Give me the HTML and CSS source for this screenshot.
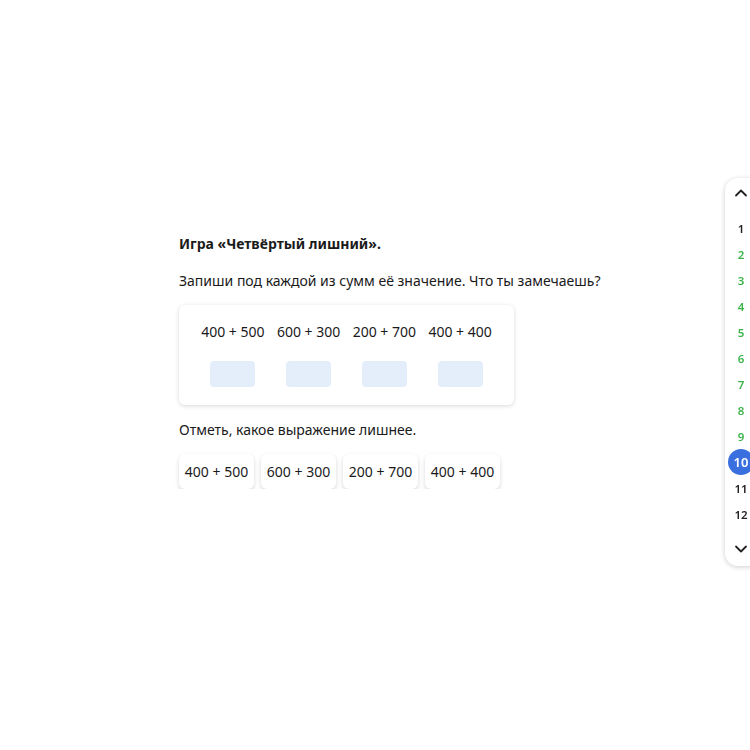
FILE: index.html
```html
<!DOCTYPE html>
<html lang="ru">
<head>
    <meta charset="UTF-8">
    <title>Четвёртый лишний</title>
    <link rel="stylesheet" href="styles.css">
</head>
<body>
    <div class="task">
        <p class="title">Игра «Четвёртый лишний».</p>
        <p class="text">Запиши под каждой из сумм её значение. Что ты замечаешь?</p>

        <!-- Sums with inputs -->
        <div class="card">
            <div class="sum">
                <span>400 + 500</span>
                <div class="answer"></div>
            </div>
            <div class="sum">
                <span>600 + 300</span>
                <div class="answer"></div>
            </div>
            <div class="sum">
                <span>200 + 700</span>
                <div class="answer"></div>
            </div>
            <div class="sum">
                <span>400 + 400</span>
                <div class="answer"></div>
            </div>
        </div>

        <p class="text">Отметь, какое выражение лишнее.</p>

        <div class="choices">
            <button>400 + 500</button>
            <button>600 + 300</button>
            <button>200 + 700</button>
            <button>400 + 400</button>
        </div>
    </div>

    <!-- Task navigation -->
    <nav class="pager">
        <svg class="arrow" width="14" height="10" viewBox="0 0 14 10"><path d="M2 7.5 L7 2.5 L12 7.5" fill="none" stroke="#222" stroke-width="1.8" stroke-linecap="round" stroke-linejoin="round"/></svg>
        <ul>
            <li>1</li>
            <li class="done">2</li>
            <li class="done">3</li>
            <li class="done">4</li>
            <li class="done">5</li>
            <li class="done">6</li>
            <li class="done">7</li>
            <li class="done">8</li>
            <li class="done">9</li>
            <li class="current">10</li>
            <li>11</li>
            <li>12</li>
        </ul>
        <svg class="arrow" width="14" height="10" viewBox="0 0 14 10"><path d="M2 2.5 L7 7.5 L12 2.5" fill="none" stroke="#222" stroke-width="1.8" stroke-linecap="round" stroke-linejoin="round"/></svg>
    </nav>
</body>
</html>
```

FILE: styles.css
```css
/* General styles */
body {
    margin: 0;
    font-family: "Noto Sans", Arial, sans-serif;
    color: #1a1a1a;
    background-color: #fff;
}

.task {
    padding: 234px 0 0 179px;
    width: 440px;
}

.title {
    margin: 0 0 17px;
    font-size: 14px;
    font-weight: bold;
    line-height: 20px;
}

.text {
    margin: 0 0 14px;
    font-size: 14px;
    line-height: 20px;
}

/* Sums card */
.card {
    display: flex;
    width: 335px;
    box-sizing: border-box;
    padding: 17px 16px 18px 16px;
    margin-bottom: 15px;
    border-radius: 6px;
    box-shadow: 0 1px 4px rgba(0, 0, 0, 0.16);
}

.sum {
    flex: 1;
    display: flex;
    flex-direction: column;
    align-items: center;
    font-size: 14px;
    line-height: 20px;
}

.answer {
    width: 45px;
    height: 26px;
    margin-top: 19px;
    border-radius: 4px;
    background-color: #e4eefb;
}

/* Choice buttons */
.choices {
    display: flex;
    gap: 7px;
}

.choices button {
    width: 75px;
    height: 35px;
    padding: 0;
    border: none;
    border-radius: 6px;
    background-color: #fff;
    box-shadow: 0 2px 4px rgba(0, 0, 0, 0.16);
    font-family: inherit;
    font-size: 14px;
    color: #1a1a1a;
    cursor: pointer;
}

/* Navigation */
.pager {
    position: fixed;
    left: 725px;
    top: 178px;
    width: 40px;
    height: 388px;
    border-radius: 13px 0 0 13px;
    box-shadow: 0 1px 5px rgba(0, 0, 0, 0.2);
    background-color: #fff;
    display: flex;
    flex-direction: column;
    align-items: flex-start;
}

.pager .arrow {
    margin: 10px 0 0 9px;
}

.pager .arrow:last-child {
    margin: 17px 0 0 9px;
}

.pager ul {
    list-style: none;
    margin: 17px 0 0;
    padding: 0;
}

.pager li {
    width: 26px;
    height: 26px;
    margin-left: 3px;
    display: flex;
    align-items: center;
    justify-content: center;
    font-size: 11.5px;
    font-weight: 600;
    color: #222;
}

.pager li.done {
    color: #3bb34a;
}

.pager li.current {
    border-radius: 50%;
    background-color: #3a6fe0;
    color: #fff;
    font-size: 13px;
}
```
